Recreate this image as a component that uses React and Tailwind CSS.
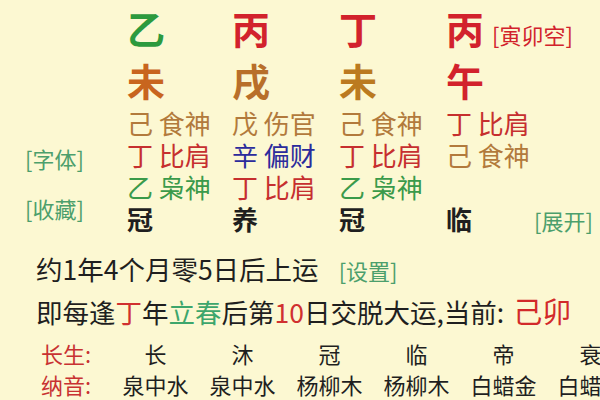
import React from "react";

const C = {
  wood: "text-[#2c9a3e]",
  fire: "text-[#d2222c]",
  earth: "text-[#c26a22]",
  earth2: "text-[#b27a3c]",
  red: "text-[#c62f2f]",
  blue: "text-[#2b2b9c]",
  green: "text-[#3a9a4a]",
  link: "text-[#4c9f6c]",
  ink: "text-[#1f1f1f]",
};

function Cell({ w, children, className = "" }) {
  return <div className={`${w} shrink-0 ${className}`}>{children}</div>;
}

export default function App() {
  const widths = ["w-[105px]", "w-[107px]", "w-[107px]", "w-[110px]"];
  const hidden = [
    [["己 食神", C.earth2], ["戊 伤官", C.earth2], ["己 食神", C.earth2], ["丁 比肩", C.red]],
    [["丁 比肩", C.red], ["辛 偏财", C.blue], ["丁 比肩", C.red], ["己 食神", C.earth2]],
    [["乙 枭神", C.green], ["丁 比肩", C.red], ["乙 枭神", C.green], ["", ""]],
  ];
  const cs = ["长", "沐", "冠", "临", "帝", "衰"];
  const ny = ["泉中水", "泉中水", "杨柳木", "杨柳木", "白蜡金", "白蜡金"];
  return (
    <div className="w-[600px] h-[400px] overflow-hidden bg-[#fcf8d2] font-['Noto_Sans_CJK_SC',sans-serif]">
      <div className="flex">
        <div className={`w-[127px] shrink-0 flex flex-col pl-[25px] pt-[145px] text-[22px] leading-[26px] ${C.link}`}>
          <div>[字体]</div>
          <div className="mt-[24px]">[收藏]</div>
        </div>
        <div className="flex flex-col pt-[2px]">
          <div className="flex h-[52px] items-baseline text-[38px] leading-[52px] font-bold">
            <Cell w={widths[0]} className={C.wood}>乙</Cell>
            <Cell w={widths[1]} className={C.fire}>丙</Cell>
            <Cell w={widths[2]} className={C.fire}>丁</Cell>
            <Cell w={widths[3]} className={`${C.fire} flex items-baseline`}>
              <span>丙</span>
              <span className="ml-[8px] text-[22px] font-normal whitespace-nowrap">[寅卯空]</span>
            </Cell>
          </div>
          <div className="flex h-[52px] items-baseline text-[38px] leading-[52px] font-bold">
            <Cell w={widths[0]} className="text-[#c8651e]">未</Cell>
            <Cell w={widths[1]} className="text-[#b86f2a]">戌</Cell>
            <Cell w={widths[2]} className="text-[#bb7a20]">未</Cell>
            <Cell w={widths[3]} className={C.fire}>午</Cell>
          </div>
          <div className="h-[1px]" />
          {hidden.map((row, i) => (
            <div key={i} className="flex h-[32px] text-[26px] leading-[32px] whitespace-pre">
              {row.map(([t, c], j) => (
                <Cell key={j} w={widths[j]} className={c}>{t}</Cell>
              ))}
            </div>
          ))}
          <div className={`flex h-[32px] items-baseline text-[26px] leading-[32px] font-bold ${C.ink}`}>
            <Cell w={widths[0]}>冠</Cell>
            <Cell w={widths[1]}>养</Cell>
            <Cell w={widths[2]}>冠</Cell>
            <Cell w="w-[88px]">临</Cell>
            <span className={`text-[22px] font-normal whitespace-nowrap ${C.link}`}>[展开]</span>
          </div>
        </div>
      </div>
      <div className={`pl-[36px] mt-[14px] text-[26.5px] leading-[40px] ${C.ink} whitespace-nowrap`}>
        <div className="flex items-baseline">
          <span>约1年4个月零5日后上运</span>
          <span className={`ml-[20px] text-[22px] ${C.link}`}>[设置]</span>
        </div>
        <div className="flex items-baseline">
          <span>即每逢</span>
          <span className="text-[#d03030]">丁</span>
          <span>年</span>
          <span className="text-[#3da66c]">立春</span>
          <span>后第</span>
          <span className="text-[#d03030]">10</span>
          <span>日交脱大运,当前:</span>
          <span className="ml-[9px] text-[29px] text-[#d22a2a]">己卯</span>
        </div>
      </div>
      <div className="pl-[41px] mt-[5px] text-[22px] whitespace-nowrap">
        <div className="flex h-[32px] leading-[32px]">
          <div className={`w-[71px] shrink-0 text-[#c83232]`}>长生:</div>
          {cs.map((t, i) => (
            <div key={i} className={`w-[87px] shrink-0 text-center ${C.ink}`}>{t}</div>
          ))}
        </div>
        <div className="flex h-[31px] leading-[31px]">
          <div className={`w-[71px] shrink-0 text-[#c83232]`}>纳音:</div>
          {ny.map((t, i) => (
            <div key={i} className={`w-[87px] shrink-0 text-center ${C.ink}`}>{t}</div>
          ))}
        </div>
      </div>
    </div>
  );
}
